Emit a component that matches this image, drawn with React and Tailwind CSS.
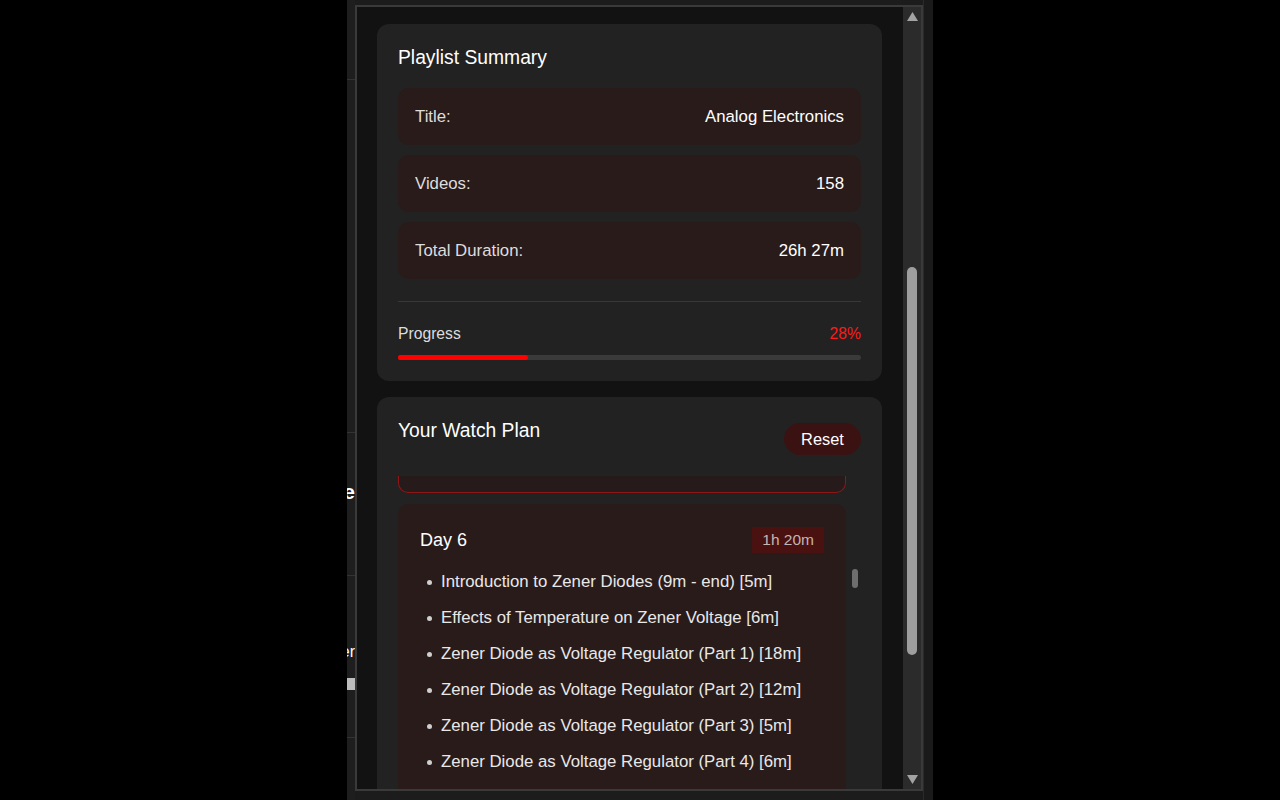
import React from "react";

const summary = [
  { label: "Title:", value: "Analog Electronics" },
  { label: "Videos:", value: "158" },
  { label: "Total Duration:", value: "26h 27m" },
];

const daySix = [
  "Introduction to Zener Diodes (9m - end) [5m]",
  "Effects of Temperature on Zener Voltage [6m]",
  "Zener Diode as Voltage Regulator (Part 1) [18m]",
  "Zener Diode as Voltage Regulator (Part 2) [12m]",
  "Zener Diode as Voltage Regulator (Part 3) [5m]",
  "Zener Diode as Voltage Regulator (Part 4) [6m]",
];

function Arrow({ down }) {
  return (
    <svg width="11" height="9" viewBox="0 0 11 9">
      <path d={down ? "M0 0 L11 0 L5.5 9 Z" : "M5.5 0 L11 9 L0 9 Z"} fill="#a3a3a3" />
    </svg>
  );
}

function PageEdge() {
  // the page behind the popup, only its edge is visible
  return (
    <div className="w-[8px] h-full flex flex-col overflow-hidden">
      <div className="h-[80px] border-b border-[#333] bg-[#1e1e1e]" />
      <div className="h-[353px] border-b border-[#333] bg-[#1e1e1e]" />
      <div className="h-[142px] bg-[#1e1e1e] flex justify-end pt-[47px] whitespace-nowrap">
        <span className="text-[21px] font-bold text-white leading-[24px]">Time</span>
      </div>
      <div className="h-[162px] bg-[#1e1e1e] border-t border-[#333] flex flex-col items-end pt-[66px] whitespace-nowrap">
        <span className="text-[16px] text-white leading-[20px]">Zener</span>
        <div className="mt-[16px] w-[8px] h-[12px] bg-[#bdbdbd]" />
      </div>
      <div className="flex-1 bg-[#1e1e1e] border-t border-[#333]" />
    </div>
  );
}

function Summary() {
  return (
    <section className="bg-[#222222] rounded-[12px] p-[21px] shrink-0">
      <h2 className="text-[19.3px] leading-[26px] text-white">Playlist Summary</h2>
      <div className="mt-[17px] flex flex-col gap-[10px]">
        {summary.map((row) => (
          <div
            key={row.label}
            className="h-[57px] px-[17px] pt-[1px] flex items-center justify-between bg-[#2a1b1b] rounded-[10px] text-[16.8px]"
          >
            <span className="text-[#dddddd]">{row.label}</span>
            <span className="text-white">{row.value}</span>
          </div>
        ))}
      </div>
      <div className="mt-[22px] border-t border-[#383838]" />
      <div className="pt-[22px] flex justify-between text-[15.7px] leading-[20px]">
        <span className="text-[#dddddd]">Progress</span>
        <span className="text-[#ff1a1a]">28%</span>
      </div>
      <div className="mt-[11px] h-[5px] rounded-full bg-[#3a3a3a]">
        <div className="h-full w-[28%] rounded-full bg-[#ff0000]" />
      </div>
    </section>
  );
}

function WatchPlan() {
  return (
    <section className="bg-[#222222] rounded-[12px] p-[21px] shrink-0">
      <div className="flex justify-between items-start">
        <h2 className="text-[19.3px] leading-[26px] text-white">Your Watch Plan</h2>
        <button className="mt-[5px] h-[32px] w-[77px] pt-[1px] rounded-full bg-[#3b1212] text-[16.4px] text-white">
          Reset
        </button>
      </div>

      {/* scrolled list of days */}
      <div className="mt-[21px] flex">
        <div className="w-[448px] flex flex-col">
          <div className="h-[17px] border-x border-b border-[#8e1616] rounded-b-[10px] bg-[#261a1a]" />
          <div className="mt-[11px] bg-[#2a1b1b] rounded-[10px] px-[22px] pt-[23px] pb-[20px]">
            <div className="h-[26px] flex items-center justify-between">
              <span className="text-[18px] text-white">Day 6</span>
              <span className="h-[26px] px-[10px] flex items-center bg-[#4a1111] text-[15.5px] text-[#c4b4b4]">
                1h 20m
              </span>
            </div>
            <ul className="mt-[11px]">
              {daySix.map((item) => (
                <li key={item} className="h-[36px] flex items-center text-[16.8px] text-[#e8e8e8]">
                  <span className="ml-[7px] mr-[9px] w-[5px] h-[5px] rounded-full bg-[#cfcfcf] shrink-0" />
                  {item}
                </li>
              ))}
            </ul>
          </div>
        </div>
        <div className="flex-1 pl-[6px]">
          <div className="mt-[93px] w-[6px] h-[19px] rounded-full bg-[#6e6e6e]" />
        </div>
      </div>
    </section>
  );
}

export default function App() {
  return (
    <div className="w-[1280px] h-[800px] bg-black flex justify-center overflow-hidden font-['Liberation_Sans',Arial,sans-serif]">
      <div className="w-[586px] h-full bg-[#1c1c1c] flex">
        <PageEdge />
        <div className="w-[568px] flex flex-col">
          <div className="h-[5px] bg-[#1c1c1c]" />
          <div className="h-[786px] border-2 border-[#3a3a3a] bg-[#121212] flex overflow-hidden">
            <div className="flex-1 pl-[20px] pr-[21px] pt-[17px] flex flex-col gap-[16px] overflow-hidden">
              <Summary />
              <WatchPlan />
            </div>
            <div className="w-[18px] bg-[#2b2b2b] flex flex-col">
              <div className="h-[19px] flex items-center justify-center">
                <Arrow />
              </div>
              <div className="flex-1 pt-[241px] px-[4px]">
                <div className="h-[388px] rounded-full bg-[#9e9e9e]" />
              </div>
              <div className="h-[19px] flex items-center justify-center">
                <Arrow down />
              </div>
            </div>
          </div>
        </div>
        <div className="w-[10px] h-full bg-[#1a1a1a] border-l border-[#2a2a2a]" />
      </div>
    </div>
  );
}
